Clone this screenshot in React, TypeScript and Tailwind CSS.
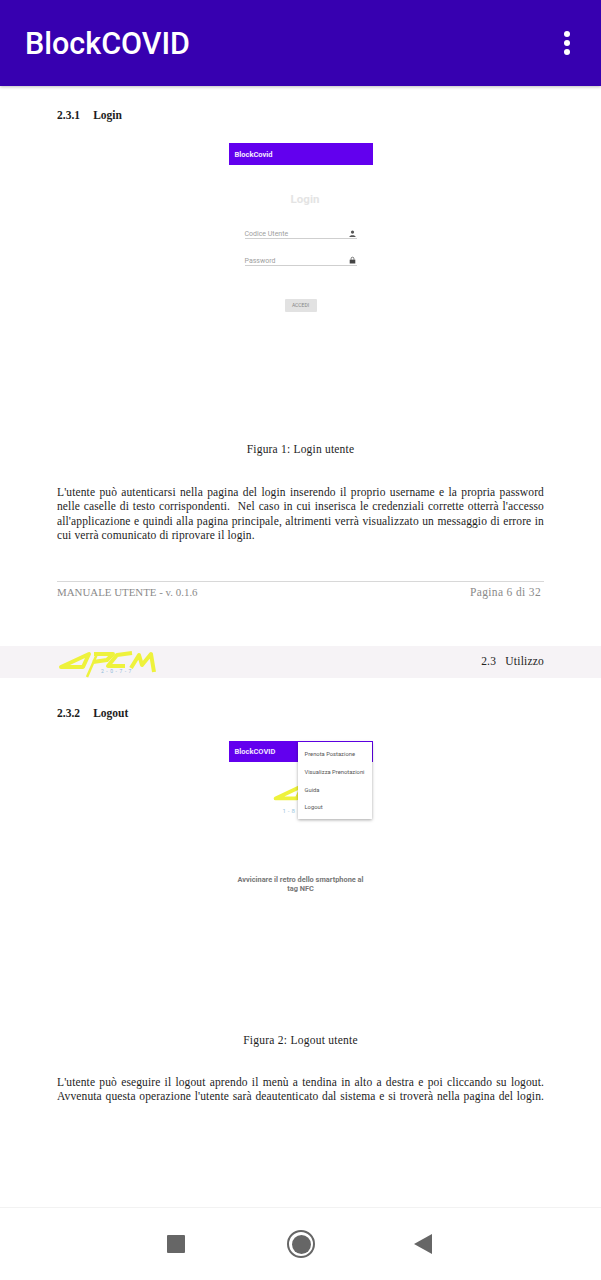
import React from "react";

const serif = "font-['Liberation_Serif',serif]";
const sans = "font-['Roboto',sans-serif]";

function Logo({ className }: { className?: string }) {
  return (
    <svg viewBox="0 0 99 28" className={className} fill="none" stroke="#eef23c" strokeWidth="4" strokeLinejoin="round" aria-hidden="true">
      <path d="M4 17 L32 4 L26 17 Z" />
      <path d="M37 4 L56 4 L50 10 L36 12" />
      <path d="M40 4 L30 27" strokeWidth="2.5" />
      <path d="M75 3 L60 5 L51 16 L68 16" />
      <path d="M74 18 L82 5 L85 15 L94 4 L97 22" />
    </svg>
  );
}

function LoginShot() {
  return (
    <div className={`mx-auto mt-[21px] h-[299px] w-[144px] ${sans}`}>
      <div className="flex h-[22px] items-center bg-[#6200ee] pl-[6px] pt-[1px] text-[7.5px] font-bold text-[#f4e9ff]">BlockCovid</div>
      <div className="mt-[26px] pl-[9px] text-center text-[11.5px] font-bold leading-[16px] text-[#e4e4e4]">Login</div>
      <div className="mx-[16px] mt-[19px] flex h-[13px] items-end justify-between border-b border-[#cfcfcf] text-[7px] leading-[8px] text-[#a0a0a0]">
        <span>Codice Utente</span>
        <svg viewBox="0 0 10 10" className="mb-[1px] mr-[1px] h-[7px] w-[7px]" fill="#555"><circle cx="5" cy="3" r="2.3" /><path d="M0.5 10 C0.5 6.5 9.5 6.5 9.5 10 Z" /></svg>
      </div>
      <div className="mx-[16px] mt-[14px] flex h-[13px] items-end justify-between border-b border-[#cfcfcf] text-[7px] leading-[8px] text-[#a0a0a0]">
        <span>Password</span>
        <svg viewBox="0 0 10 10" className="mb-[1px] mr-[1px] h-[8px] w-[7px]" fill="#444"><path d="M1 4.5h8V10H1z" /><path d="M3 4.5V3a2 2 0 0 1 4 0v1.5" fill="none" stroke="#444" strokeWidth="1" /></svg>
      </div>
      <div className="mx-auto mt-[33px] flex h-[13px] w-[32px] items-center justify-center rounded-[1px] bg-[#e2e2e2] text-[5px] text-[#888]">ACCEDI</div>
    </div>
  );
}

function LogoutShot() {
  return (
    <div className={`relative mx-auto mt-[21px] h-[292px] w-[144px] ${sans}`}>
      <div className="flex h-[21px] items-center bg-[#6200ee] pl-[6px] text-[7.5px] font-bold text-[#f0e4ff]">BlockCOVID</div>
      <div className="relative ml-[41px] mt-[20px] h-[30px] w-[99px]">
        <Logo className="h-[27px] w-[99px]" />
        <span className="absolute left-[13px] top-[26px] text-[6px] leading-[6px] tracking-[2px] text-[#9cc8e0]">1-8</span>
      </div>
      <div className="mt-[63px] text-center text-[7.4px] font-bold leading-[9px] text-[#777]">
        Avvicinare il retro dello smartphone al
        <br />
        tag NFC
      </div>
      <div className="absolute left-[69px] top-[1px] flex h-[77px] w-[74px] flex-col justify-around bg-white pb-[2px] pl-[7px] pt-[4px] text-[5.8px] text-[#555] shadow-[0_1px_3px_rgba(0,0,0,0.35)]">
        <span>Prenota Postazione</span>
        <span>Visualizza Prenotazioni</span>
        <span>Guida</span>
        <span>Logout</span>
      </div>
    </div>
  );
}

export default function App() {
  return (
    <div className="flex h-[1280px] w-[601px] flex-col overflow-hidden bg-white">
      <header className={`z-10 flex h-[86px] shrink-0 items-center justify-between bg-[#3700b0] pl-[25px] pr-[31px] shadow-[0_1px_3px_rgba(0,0,0,0.25)] ${sans}`}>
        <h1 className="pt-[3px] text-[30.5px] font-medium leading-none text-white">BlockCOVID</h1>
        <div className="flex flex-col gap-[3px]">
          <span className="h-[6px] w-[6px] rounded-full bg-white" />
          <span className="h-[6px] w-[6px] rounded-full bg-white" />
          <span className="h-[6px] w-[6px] rounded-full bg-white" />
        </div>
      </header>

      <main className={`flex-1 overflow-hidden text-[#1d1d1d] ${serif}`}>
        <section className="px-[57px]">
          <h2 className="mt-[22px] text-[11.5px] font-bold leading-[14px] [word-spacing:1.5px]">2.3.1 &nbsp; Login</h2>
          <LoginShot />
          <p className="text-center text-[11.5px] leading-[14px] tracking-[0.2px]">Figura 1: Login utente</p>
          <p className="mt-[29px] text-justify text-[11.5px] leading-[14.4px] tracking-[0.12px]">
            L'utente può autenticarsi nella pagina del login inserendo il proprio username e la propria password nelle caselle di testo corrispondenti.&nbsp; Nel caso in cui inserisca le credenziali corrette otterrà l'accesso all'applicazione e quindi alla pagina principale, altrimenti verrà visualizzato un messaggio di errore in cui verrà comunicato di riprovare il login.
          </p>
          <div className="mt-[38px] flex h-[21px] items-center justify-between border-t border-[#d8d8d8] pr-[3px] pt-[1px] text-[11.5px] tracking-[0.35px] text-[#8a8a8a]">
            <span className="text-[10.9px] tracking-normal">MANUALE UTENTE - v. 0.1.6</span>
            <span>Pagina 6 di 32</span>
          </div>
        </section>

        <div className="mt-[44px] flex h-[32px] items-center justify-between bg-[#f6f3f6] px-[57px]">
          <div className="relative mt-[4px] h-[28px] w-[99px]">
            <Logo className="h-[28px] w-[99px]" />
            <span className={`absolute left-[44px] top-[18px] text-[5px] leading-[6px] tracking-[2.5px] text-[#8fb8d8] ${sans}`}>2-0-7-7</span>
          </div>
          <span className="text-[11.5px] tracking-[0.2px] text-[#222]">2.3 &nbsp; Utilizzo</span>
        </div>

        <section className="px-[57px]">
          <h2 className="mt-[28px] text-[11.5px] font-bold leading-[14px] [word-spacing:1.5px]">2.3.2 &nbsp; Logout</h2>
          <LogoutShot />
          <p className="text-center text-[11.5px] leading-[14px] tracking-[0.25px]">Figura 2: Logout utente</p>
          <p className="mt-[28px] text-justify text-[11.5px] leading-[14.4px] tracking-[0.12px] [text-align-last:justify]">
            L'utente può eseguire il logout aprendo il menù a tendina in alto a destra e poi cliccando su logout. Avvenuta questa operazione l'utente sarà deautenticato dal sistema e si troverà nella pagina del login.
          </p>
        </section>
      </main>

      <nav className="relative flex h-[73px] shrink-0 items-center border-t border-[#f2f2f2] bg-white">
        <div className="ml-[167px] h-[18px] w-[18px] rounded-[1px] bg-[#666]" />
        <div className="ml-[102px] flex h-[28px] w-[28px] items-center justify-center rounded-full border-[2px] border-[#666]">
          <div className="h-[19px] w-[19px] rounded-full bg-[#666]" />
        </div>
        <svg viewBox="0 0 18 20" className="ml-[99px] h-[20px] w-[18px]" fill="#666" aria-hidden="true">
          <path d="M0 10 L18 0 V20 Z" />
        </svg>
      </nav>
    </div>
  );
}
